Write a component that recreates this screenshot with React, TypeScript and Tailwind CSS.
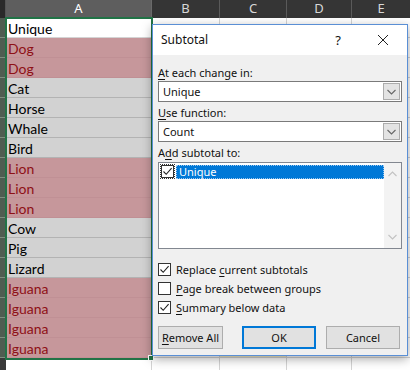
import React from "react";

type Kind = "w" | "p" | "g";
const rows: { t: string; k: Kind }[] = [
  { t: "Unique", k: "w" },
  { t: "Dog", k: "p" },
  { t: "Dog", k: "p" },
  { t: "Cat", k: "g" },
  { t: "Horse", k: "g" },
  { t: "Whale", k: "g" },
  { t: "Bird", k: "g" },
  { t: "Lion", k: "p" },
  { t: "Lion", k: "p" },
  { t: "Lion", k: "p" },
  { t: "Cow", k: "g" },
  { t: "Pig", k: "g" },
  { t: "Lizard", k: "g" },
  { t: "Iguana", k: "p" },
  { t: "Iguana", k: "p" },
  { t: "Iguana", k: "p" },
  { t: "Iguana", k: "p" },
];

function Check({ checked, focus }: { checked: boolean; focus?: boolean }) {
  return (
    <div
      className={
        focus
          ? "w-[15px] h-[15px] flex items-center justify-center border border-dotted border-[#333]"
          : "w-[13px] h-[13px] flex items-center justify-center"
      }
    >
      <div className="w-[13px] h-[13px] border border-[#333] bg-white flex items-center justify-center">
        {checked && (
          <svg width="11" height="11" viewBox="0 0 11 11">
            <path d="M1.5 5.5 L4.2 8.3 L9.6 2.2" fill="none" stroke="#222" strokeWidth="1.1" />
          </svg>
        )}
      </div>
    </div>
  );
}

function Chevron({ color = "#555", up = false }: { color?: string; up?: boolean }) {
  return (
    <svg width="9" height="6" viewBox="0 0 9 6">
      <path
        d={up ? "M0.5 5 L4.5 1 L8.5 5" : "M0.5 1 L4.5 5 L8.5 1"}
        fill="none"
        stroke={color}
        strokeWidth="1.1"
      />
    </svg>
  );
}

function Select({ value }: { value: string }) {
  return (
    <div className="h-[21px] border border-[#7a7a7a] bg-white flex items-center">
      <span className="pl-[4px] flex-1">{value}</span>
      <div className="w-[17px] h-[17px] mr-[1px] bg-[#e3e3e3] border border-[#acacac] flex items-center justify-center">
        <Chevron color="#666" />
      </div>
    </div>
  );
}

export default function App() {
  const cellFont = "font-['Lato',sans-serif] text-[14px]";
  return (
    <div className="relative w-[410px] h-[370px] overflow-hidden bg-white">
      {/* Sheet */}
      <div className="flex flex-col">
        <div className="flex h-[18px] bg-[#353535] text-[#d8d8d8] font-['Noto_Sans',sans-serif] text-[13px]">
          <div className="w-[6px] bg-[#2a2a2a] border-r border-[#555]" />
          <div className="w-[146px] bg-[#5e5e5e] text-white flex items-center justify-center border-r border-[#6a6a6a]">A</div>
          <div className="w-[68px] flex items-center justify-center border-r border-[#5a5a5a]">B</div>
          <div className="w-[67px] flex items-center justify-center border-r border-[#5a5a5a]">C</div>
          <div className="w-[65px] flex items-center justify-center border-r border-[#5a5a5a]">D</div>
          <div className="flex-1 flex items-center justify-center">E</div>
        </div>
        {rows.map((r, i) => (
          <div key={i} className="flex h-[20px]">
            <div className="w-[6px] bg-[#4f5d51] border-b border-[#7f8f80]" />
            <div
              className={
                r.k === "p"
                  ? `w-[146px] bg-[#c6979b] text-[#8e1016] border-b border-[#c09095] flex items-center pl-[2px] pt-[2px] ${cellFont}`
                  : r.k === "g"
                  ? `w-[146px] bg-[#d2d2d2] text-black border-b border-[#b3b3b3] flex items-center pl-[2px] pt-[2px] ${cellFont}`
                  : `w-[146px] bg-white text-black border-b border-[#d4d4d4] flex items-center pl-[2px] pt-[2px] ${cellFont}`
              }
            >
              {r.t}
            </div>
            <div className="w-[68px] border-r border-b border-[#d4d4d4]" />
            <div
              className={
                i === rows.length - 1
                  ? "w-[67px] bg-[#f6efc6] border-r border-b border-[#d4d4d4]"
                  : "w-[67px] border-r border-b border-[#d4d4d4]"
              }
            />
            <div className="w-[65px] border-r border-b border-[#d4d4d4]" />
            <div className="flex-1 border-b border-[#d4d4d4]" />
          </div>
        ))}
        <div className="flex h-[20px]">
          <div className="w-[6px] bg-[#3a3a3a]" />
          <div className="w-[146px] border-r border-b border-[#d4d4d4]" />
          <div className="w-[68px] border-r border-b border-[#d4d4d4]" />
          <div className="w-[67px] border-r border-b border-[#d4d4d4]" />
          <div className="w-[65px] border-r border-b border-[#d4d4d4]" />
          <div className="flex-1 border-b border-[#d4d4d4]" />
        </div>
      </div>

      {/* Selection border */}
      <div className="absolute left-[5px] top-[17px] w-[148px] h-[343px] border-2 border-[#217346]" />
      <div className="absolute left-[148px] top-[355px] w-[6px] h-[6px] bg-[#217346] border border-white" />

      {/* Dialog */}
      <div className="absolute left-[152px] top-[24px] w-[256px] h-[332px] border border-[#5a8fd5] bg-[#f0f0f0] shadow-[0_3px_10px_rgba(0,0,0,0.35)] flex flex-col font-['Noto_Sans',sans-serif] text-[11px] text-[#111] leading-[14px]">
        <div className="h-[30px] bg-white flex items-center pl-[8px] shrink-0">
          <span className="text-[12px]">Subtotal</span>
          <span className="ml-auto text-[13px] mr-[36px]">?</span>
          <svg width="12" height="12" viewBox="0 0 12 12" className="mr-[18px]">
            <path d="M1 1 L11 11 M11 1 L1 11" stroke="#222" strokeWidth="1" />
          </svg>
        </div>
        <div className="flex flex-col px-[5px] pt-[11px]">
          <div className="h-[14px] flex items-center">
            <span>
              <span className="underline underline-offset-2">A</span>t each change in:
            </span>
          </div>
          <div className="mt-[1px]">
            <Select value="Unique" />
          </div>
          <div className="h-[14px] mt-[4px] flex items-center">
            <span>
              <span className="underline underline-offset-2">U</span>se function:
            </span>
          </div>
          <div className="mt-[1px]">
            <Select value="Count" />
          </div>
          <div className="h-[14px] mt-[4px] flex items-center">
            <span>
              A<span className="underline underline-offset-2">d</span>d subtotal to:
            </span>
          </div>
          <div className="mt-[2px] h-[87px] border border-[#828790] bg-white flex">
            <div className="flex-1 pt-[1px] pl-[1px]">
              <div className="flex items-center h-[15px]">
                <Check checked focus />
                <div className="flex-1 ml-[1px] h-[14px] bg-[#0078d7] text-white border border-dotted border-[#9cc8f0] flex items-center pl-[2px]">
                  Unique
                </div>
              </div>
            </div>
            <div className="w-[17px] bg-[#f3f3f3] flex flex-col items-center justify-between py-[8px]">
              <Chevron color="#c2c2c2" up />
              <Chevron color="#c2c2c2" />
            </div>
          </div>
          <div className="mt-[11px] flex flex-col">
            <div className="h-[19px] flex items-center">
              <Check checked />
              <span className="ml-[5px]">
                Replace <span className="underline underline-offset-2">c</span>urrent subtotals
              </span>
            </div>
            <div className="h-[19px] flex items-center">
              <Check checked={false} />
              <span className="ml-[5px]">
                <span className="underline underline-offset-2">P</span>age break between groups
              </span>
            </div>
            <div className="h-[19px] flex items-center">
              <Check checked />
              <span className="ml-[5px]">
                <span className="underline underline-offset-2">S</span>ummary below data
              </span>
            </div>
          </div>
          <div className="mt-[9px] flex items-center">
            <div className="w-[65px] h-[23px] bg-[#e1e1e1] border border-[#adadad] flex items-center justify-center">
              <span>
                <span className="underline underline-offset-2">R</span>emove All
              </span>
            </div>
            <div className="ml-[19px] w-[74px] h-[23px] bg-[#e1e1e1] border-2 border-[#0078d7] flex items-center justify-center">
              OK
            </div>
            <div className="ml-[10px] w-[74px] h-[23px] bg-[#e1e1e1] border border-[#adadad] flex items-center justify-center">
              Cancel
            </div>
          </div>
        </div>
      </div>
    </div>
  );
}
